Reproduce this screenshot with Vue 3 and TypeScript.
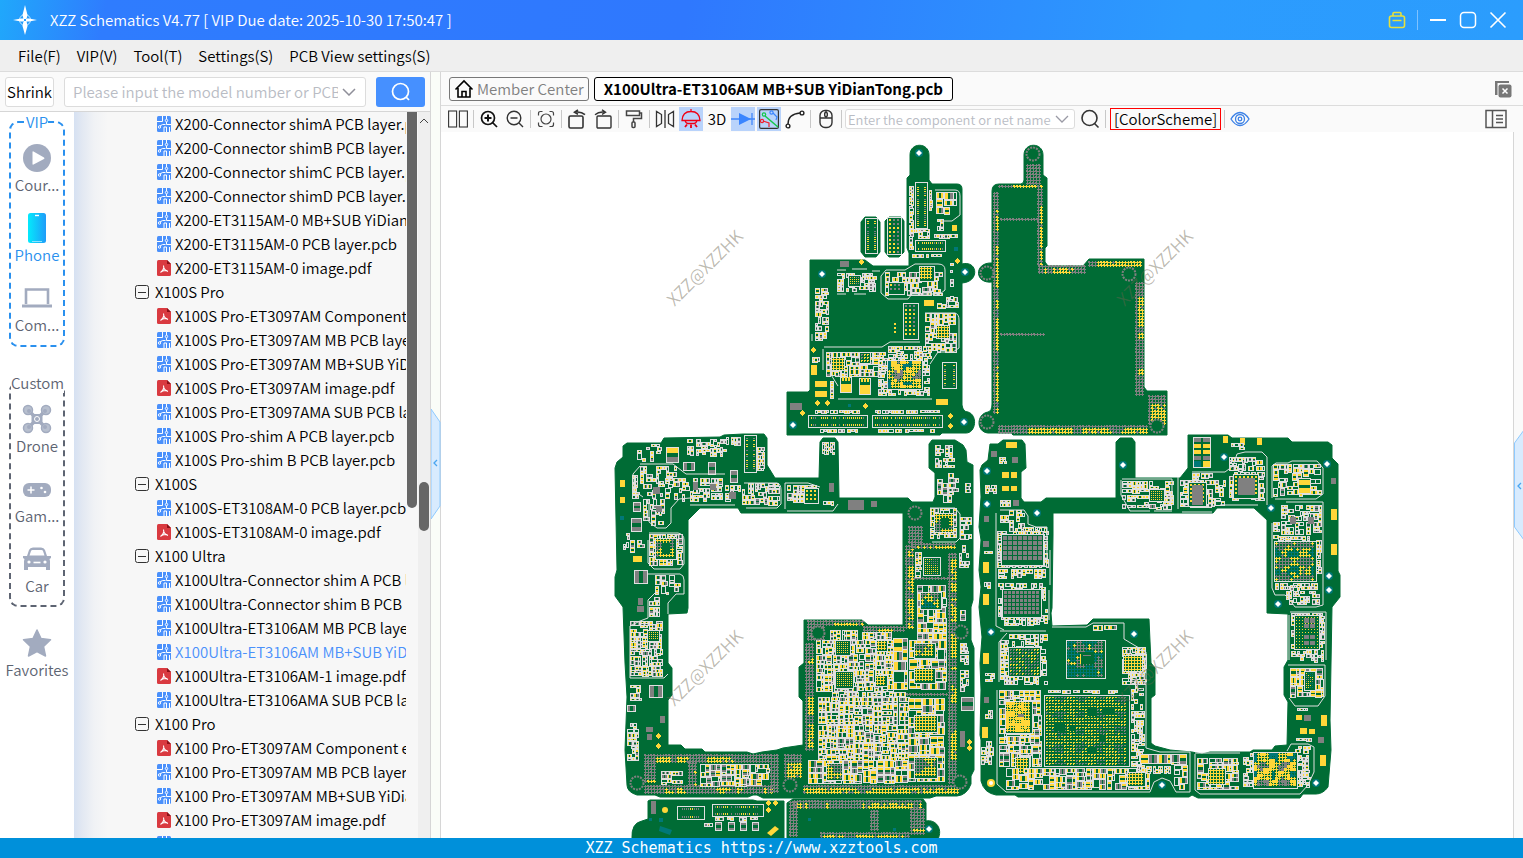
<script setup lang="ts">
import { ref } from 'vue'

type Kind = 'pcb' | 'pdf' | 'group'
interface Row { kind: Kind; text: string; active?: boolean }

const rows: Row[] = [
  { kind: 'pcb', text: 'X200-Connector shimA PCB layer.pcb' },
  { kind: 'pcb', text: 'X200-Connector shimB PCB layer.pcb' },
  { kind: 'pcb', text: 'X200-Connector shimC PCB layer.pcb' },
  { kind: 'pcb', text: 'X200-Connector shimD PCB layer.pcb' },
  { kind: 'pcb', text: 'X200-ET3115AM-0 MB+SUB YiDianTong.pcb' },
  { kind: 'pcb', text: 'X200-ET3115AM-0 PCB layer.pcb' },
  { kind: 'pdf', text: 'X200-ET3115AM-0 image.pdf' },
  { kind: 'group', text: 'X100S Pro' },
  { kind: 'pdf', text: 'X100S Pro-ET3097AM Component e.pdf' },
  { kind: 'pcb', text: 'X100S Pro-ET3097AM MB PCB layer.pcb' },
  { kind: 'pcb', text: 'X100S Pro-ET3097AM MB+SUB YiDianTong.pcb' },
  { kind: 'pdf', text: 'X100S Pro-ET3097AM image.pdf' },
  { kind: 'pcb', text: 'X100S Pro-ET3097AMA SUB PCB layer.pcb' },
  { kind: 'pcb', text: 'X100S Pro-shim A PCB layer.pcb' },
  { kind: 'pcb', text: 'X100S Pro-shim B PCB layer.pcb' },
  { kind: 'group', text: 'X100S' },
  { kind: 'pcb', text: 'X100S-ET3108AM-0 PCB layer.pcb' },
  { kind: 'pdf', text: 'X100S-ET3108AM-0 image.pdf' },
  { kind: 'group', text: 'X100 Ultra' },
  { kind: 'pcb', text: 'X100Ultra-Connector shim A PCB layer.pcb' },
  { kind: 'pcb', text: 'X100Ultra-Connector shim B PCB layer.pcb' },
  { kind: 'pcb', text: 'X100Ultra-ET3106AM MB PCB layer.pcb' },
  { kind: 'pcb', text: 'X100Ultra-ET3106AM MB+SUB YiDianTong.pcb', active: true },
  { kind: 'pdf', text: 'X100Ultra-ET3106AM-1 image.pdf' },
  { kind: 'pcb', text: 'X100Ultra-ET3106AMA SUB PCB layer.pcb' },
  { kind: 'group', text: 'X100 Pro' },
  { kind: 'pdf', text: 'X100 Pro-ET3097AM Component e.pdf' },
  { kind: 'pcb', text: 'X100 Pro-ET3097AM MB PCB layer.pcb' },
  { kind: 'pcb', text: 'X100 Pro-ET3097AM MB+SUB YiDianTong.pcb' },
  { kind: 'pdf', text: 'X100 Pro-ET3097AM image.pdf' },
  { kind: 'pcb', text: 'X100 Pro-ET3097AMA SUB PCB layer.pcb' },
]

const menus = ['File(F)', 'VIP(V)', 'Tool(T)', 'Settings(S)', 'PCB View settings(S)']
const model = ref('')
const net = ref('')

/* ---------- board view ---------- */
const outlines = [
  'M910 155C910 142 929 142 929 155V180L932 184H957Q962 184 962 189V264C978 260 980 282 962 283V405Q963 412 968 412C978 415 976 433 966 433H942L940 435H787V392H808L810 390V260H865L873 266H909V253L907 248V178L910 175Z',
  'M861 222L865 217H876L880 222V252L876 257H865L861 252Z M885 252V221L889 217H901L904 221V252L899 257H889Z',
  'M1024 155C1024 142 1043 142 1043 155V175L1047 178V246L1045 248V262L1048 266H1083L1089 259H1144V387L1147 391H1167V435H1013L1011 433H988C976 432 976 414 988 412Q992 411 992 404V282C974 284 974 262 992 263V191Q992 184 999 184H1021Q1024 183 1024 180Z',
  'M623 446L627 443H661L664 438L720 437L724 435L743 434H764L767 438V465L775 478H819L820 442L823 438H835L838 442L839 498H908L912 502H933L935 497V473L929 468V444L932 440H955L963 445L966 450L967 462L973 465V600L971 607V640L974 648V770L971 776V784Q967 795 957 796H936L930 798H763L757 795H753L748 797H660L655 795H637Q627 792 627 785L625 750L627 697L625 663L623 607L615 596V577L617 570L615 468L617 462L623 457Z M700 508L688 520V608L687 613L668 614V663L672 668V695L668 700V745H681L685 749H702L705 752H747L753 754L762 752L777 750L783 748L803 745V701L799 697V667L804 663V620H862L868 625H903V513H741L738 508Z',
  'M990 444H998L1003 440H1022L1025 444L1026 468L1021 472V498L1024 502H1041L1046 498H1116V442L1120 438H1132L1135 442V478H1180L1188 468V435H1228L1232 438H1288L1292 442H1328L1332 445V458L1338 464V571L1340 575V597L1332 607L1330 720L1331 750L1328 787Q1323 794 1316 794H1303L1300 798H1198L1192 795L1189 797H1018L1015 795H996Q984 793 981 781V740L980 735L981 690L980 663L982 637L979 607L981 587L979 570L981 540L979 527L981 497L980 470L982 465L988 460Z M1053 513V535L1052 608L1051 613L1052 626L1087 625L1093 619H1149L1151 663L1155 668V695L1151 698V743L1155 746L1170 750L1192 752L1202 754L1210 752H1250L1253 750H1272L1275 746L1287 745L1288 702L1284 695V667L1288 660V614L1267 613V520L1254 508H1217L1213 513Z',
  'M648 801L650 800H753L757 801H784V839H632Q631 823 642 821L648 819Z',
  'M787 803L793 799H923L926 803V821C936 819 943 829 938 839H787Z',
]

const silk = [
  'M881 283V276L886 270H905L915 264H938Q945 264 945 270V290L940 294H912L908 299H888L881 293Z',
  'M925 313H955Q959 314 959 320V348L953 352H938L930 364 M812 341V334 M824 347L832 347H882L890 342H920',
  'M823 349V370M830 373L838 386M838 399H932',
  'M935 190H955Q960 190 960 196V215L952 221H942 M837 270H846M852 269H867M872 271H880M837 294H846M854 294H866',
  'M640 464H673L686 474H725 M640 466L633 474V490L643 497M649 500V522L657 528H666L671 523V508L679 499L690 498',
  'M690 505H735M744 483H777Q781 484 781 490V504L777 508H746M785 509V483H808L820 487M787 511H833L838 504',
  'M649 533H678Q684 534 684 540V564L680 569H654L648 563V540M648 574H680Q684 575 684 580V594H676L668 603V614',
  'M630 678V626L640 621L648 618V600L655 593M630 678H664L668 674',
  'M930 508H955L960 514V538L956 542H932',
  'M996 513V626L1004 630M1000 510H1024L1028 516V524L1036 527H1047V560M1050 550V585M1049 590V620M1000 631H1046M1007 633L999 642V682',
  'M997 690V784L1006 792H1150L1154 782L1162 778L1170 781L1176 792H1190V752H1160L1146 748V652L1134 645L1124 639V623H1093L1086 627H1052',
  'M1122 479H1172V500M1121 480V495L1130 511H1150M1154 511H1172M1178 477V509M1182 512H1212M1192 472H1225L1233 466L1237 454L1245 452H1262L1267 457V505M1220 505H1258',
  'M1272 498V466L1276 463H1288L1292 461H1317L1323 468V494L1316 499H1275M1286 502H1323V605L1316 607H1295L1290 600L1285 595H1275L1272 588V523',
  'M1290 612H1326V660M1289 615V660M1288 665H1325V696L1318 706H1295L1289 698',
  'M1195 753H1240M1195 754V790L1200 794H1300L1308 785L1314 772V747L1308 744H1291L1287 751',
].join('')

const listing = `
c 915 182 13 47|p 909 186 5 64 4 .9|p 929 190 4 22 4 .9|p 936 192 21 24 8 .8|p 937 219 9 12 4 .8|y 952 225 5 6|p 910 229 20 10 4 .8|p 934 234 24 5 4 .9|c 915 240 31 12|p 912 254 31 4 4 .9|t 954 247 4 4|g 840 261 9 6
p 837 273 40 19 4 .8|b 848 275 13 12 2 1 m|p 885 272 58 24 6 .75|b 919 266 16 16 3 3 y|b 888 282 17 13 4 2 m|p 815 288 14 53 5 .85|b 903 303 16 37 4 2 m|y 924 300 10 6|p 937 297 22 12 5 .8|p 925 313 32 40 6 .85|b 936 325 14 14 3 3 y|p 888 346 44 14 4 .9
p 826 352 60 25 6 .9|b 831 357 14 14 3 3 y|b 859 352 12 12 3 2 m|p 878 358 52 38 4 .85|k 840 377 12 16 Y|k 859 378 12 17 Y|b 887 360 36 30 3 3 q|c 942 362 15 27|y 815 381 12 6|y 815 391 12 6|y 811 365 6 10|y 936 399 12 6|g 790 403 12 7|p 830 381 4 18 4 .9|p 812 357 8 6 4 .9
c 808 415 60 13|c 872 415 71 13|p 815 410 45 4 4 .9|p 875 410 65 4 4 .9|p 816 429 42 4 4 .8|p 878 429 57 4 4 .8|d 817 403|d 827 403|d 865 406|d 802 413|d 950 416|d 950 426|d 813 350|t 848 404 3 3|d 957 261|d 861 262
y 894 323 2 2|y 894 327 2 2|y 894 331 2 2|c 865 218 13 36|b 887 217 15 38 4 2 m|p 950 260 4 40 4 .5
v 1026 164 16 20 0|v 993 192 7 222 .6|v 998 185 45 4 .6|v 1037 188 7 78 .65|v 1038 265 48 8 .7|v 1088 261 55 5 .6|v 1135 282 8 114 .5|v 1148 395 18 30 .6|v 998 425 150 8 .85|v 1000 218 38 4 0|v 1000 333 46 2 0
c 744 435 13 38|p 757 447 8 25 4 .9|p 687 439 44 18 4 .6|p 720 437 22 9 4 .7|p 637 444 25 18 5 .5|k 666 447 13 16 y|k 683 462 12 9 g|k 708 462 8 13 g|k 730 470 8 13 g|p 640 466 37 18 5 .7|p 632 475 8 25 4 .8|p 643 484 22 42 5 .7|p 665 478 58 24 5 .75|p 725 485 16 17 5 .8|g 653 487 7 7|g 656 506 6 6|g 710 484 6 6|g 729 492 7 7|g 693 482 5 8
p 742 483 38 24 5 .8|p 787 485 30 18 5 .8|b 804 488 15 16 4 2 y|p 823 501 13 5 4 .7|p 822 442 13 13 4 .9|g 829 483 5 9|g 848 500 16 10|g 871 501 6 6|p 935 445 20 23 4 .8|p 937 473 22 30 6 .8|p 965 483 6 12 4 .9|p 930 508 27 31 5 .9|b 934 513 20 20 3 3 m|s 941 518 8 10
p 960 517 12 23 6 .8|p 959 545 11 23 4 .8|p 960 610 10 12 6 .8|p 960 643 9 22 4 .8|p 960 670 10 23 5 .8|k 961 697 13 14 g|g 960 731 5 16|d 969 742|d 969 748|y 620 480 5 7|y 620 497 5 6|t 620 516 4 4|y 633 556 9 6|k 633 502 8 10 g|k 631 518 11 14 g|p 623 530 7 20 4 .8|p 630 540 15 13 6 .8
p 649 534 34 32 5 .9|b 655 538 22 22 3 3 m|s 662 543 8 11|k 634 570 14 14 g|p 655 575 27 20 6 .7|p 649 597 11 20 5 .8|g 638 598 5 7|g 637 606 7 6|p 630 621 33 56 5 .9|b 647 630 13 12 2 1 y|p 630 682 12 20 5 .8|k 649 685 14 13 g|k 627 705 9 7 g|p 627 723 12 38 5 .8|g 660 716 5 7|g 646 727 7 5|g 647 734 5 6|d 658 736|d 658 746
v 644 754 128 9 .5|v 644 785 128 8 .4|v 644 762 12 22 .4|v 688 762 9 24 .3|v 770 754 8 38 0|p 661 771 22 14 5 .9|p 700 764 70 23 7 .95|v 784 754 18 24 .7
v 825 620 38 6 .75|v 807 620 18 22 0|v 863 626 42 7 .75|v 905 545 8 84 .65|v 911 543 44 6 .6|v 908 526 16 18 0|v 948 553 8 230 .55|v 805 643 8 108 .6|v 803 785 155 8 .85|v 913 577 35 4 0|v 903 693 44 3 0|p 915 552 7 26 5 .9|b 923 557 18 19 2 1 m
p 917 585 30 55 8 .95|b 920 592 22 18 3 3 t|p 909 640 38 50 9 1|p 893 638 15 52 12 1|p 816 640 78 52 6 1|p 830 630 28 11 5 1|p 862 632 30 8 6 1|b 835 640 16 16 2 1 y|b 835 671 19 18 2 1 y|b 875 675 13 12 3 3 y|b 876 640 12 12 3 3 y|p 822 692 84 6 5 .9|p 818 697 92 66 6 1|p 908 698 37 84 9 1|p 808 760 100 24 8 1
b 914 643 22 16 3 3 m|b 914 668 22 16 3 3 y|b 914 715 24 18 3 3 y|b 914 757 24 22 3 3 m|b 826 763 17 18 3 3 m
y 1006 442 11 6|y 1002 472 7 6|y 1011 472 6 6|y 1002 486 7 5|y 1011 486 6 5|g 991 451 6 6|g 1012 457 6 6|p 999 457 8 7 4 .9|p 985 485 12 9 4 .9|p 1000 500 11 7 4 .8|g 1013 500 6 6
p 1000 510 25 22 5 .7|p 1023 527 24 6 4 .9|p 997 531 52 37 4 .9|b 1001 534 43 32 5 4 g|p 998 569 50 10 5 .8|p 998 583 50 43 4 .85|b 1002 589 40 29 4 3 g|y 983 562 6 11|y 983 594 6 11|y 983 653 6 11|y 982 727 6 11|g 984 516 5 6|g 983 541 6 6|g 984 697 5 6|p 984 582 9 9 4 .8|p 984 551 9 4 4 .8|p 985 673 10 9 4 .8|p 985 710 8 9 5 .9|p 981 741 13 24 5 .8
p 1000 634 48 51 5 .75|b 1008 647 33 30 3 2 n|b 1066 640 40 39 3 3 T|s 1080 652 14 12|g 1083 655 8 1|y 1080 654 1 10|p 1093 625 24 6 7 1|p 1122 647 25 38 5 .9|b 1123 655 20 17 3 3 y|p 1131 673 14 95 4 .85|p 1048 690 70 4 4 .7|p 999 690 43 77 7 .95|b 1005 701 28 33 3 3 Y|b 1015 757 15 18 3 3 y|b 1044 695 86 72 3 2 u|s 1087 707 10 9|s 1103 707 11 8|s 1055 722 10 9|s 1069 725 7 6|s 1099 735 7 6|s 1087 748 9 5
p 1006 768 144 22 7 .9|p 1140 754 47 11 10 1|p 1137 766 35 8 4 .9|p 1174 765 15 25 7 .8|b 1127 772 19 15 3 3 y|p 1122 481 52 29 5 .7|b 1149 489 16 13 2 1 y|p 1180 480 46 28 5 .8|b 1188 482 19 25 4 2 y|g 1192 485 11 20|p 1192 473 22 7 4 .8
k 1193 437 18 31 s|g 1194 438 7 4|g 1203 438 7 4|y 1194 444 7 4|y 1203 444 7 4|y 1194 450 7 4|y 1203 450 7 4|g 1194 456 7 4|g 1203 456 7 4|t 1194 461 7 6|y 1203 461 7 6|y 1223 436 5 7|y 1240 438 5 7|y 1257 438 5 7|p 1231 443 14 8 4 .7|p 1229 457 36 44 5 .8|b 1233 474 26 25 4 2 y|g 1238 478 17 17
p 1273 464 49 33 6 .8|k 1298 478 13 16 s|y 1299 480 11 5|y 1299 488 11 5|y 1331 509 6 11|y 1331 544 6 11|g 1331 478 5 6|p 1281 505 41 30 5 .85|g 1290 517 6 7|g 1308 517 6 7|p 1273 522 7 18 4 .8|p 1278 536 38 5 4 .9|p 1316 540 6 34 4 .9|b 1274 541 43 41 3 3 t|p 1275 583 44 8 4 .9|p 1286 591 34 14 4 .85
p 1291 613 34 50 4 .85|b 1294 615 26 35 3 1 y|g 1304 618 5 5|g 1310 618 5 5|g 1304 624 5 4|g 1310 624 5 4|g 1304 635 5 4|g 1310 635 5 4|g 1304 641 5 4|g 1310 641 5 4|p 1290 668 34 30 7 .9|b 1304 671 12 20 2 1 t|p 1297 708 11 4 4 .9|y 1296 715 6 5|g 1304 715 7 6|y 1321 715 6 11|y 1300 728 7 6|y 1309 729 6 5|p 1296 738 16 4 4 .9|g 1318 737 6 6|y 1320 755 6 11
p 1197 758 42 32 7 .9|b 1208 768 18 17 3 3 y|p 1243 753 10 34 4 .8|p 1295 746 16 42 4 .85|b 1253 752 45 37 3 3 q
g 651 801 5 13|c 677 806 28 14|c 712 804 52 13|p 710 817 50 5 4 .8|p 704 823 9 4 4 1|k 715 822 7 9 g|k 728 822 7 9 g|k 740 822 7 9 g|k 752 822 7 9 g|d 768 803|d 775 803|d 768 810|t 659 818 4 4|t 649 818 3 3
v 793 800 128 8 .6|v 789 801 8 37 0|v 870 810 9 20 .2|v 910 808 14 28 .3|v 820 832 90 6 .6|t 808 818 3 3|t 893 828 3 3
`

const holes: [number, number][] = [
  [919, 153], [822, 274], [965, 272], [793, 425], [964, 422], [987, 471], [987, 504], [1037, 513], [991, 632],
  [1123, 465], [1224, 457], [1327, 464], [1271, 508], [1329, 576], [1329, 590], [1278, 604], [1134, 634], [1162, 785], [1316, 783], [929, 829],
]
const rings: [number, number][] = [
  [1033, 154], [987, 273], [987, 422], [1129, 274], [1157, 426], [790, 785], [637, 783], [960, 782], [961, 632], [915, 513], [818, 633],
]
const marks: [number, number][] = [[704, 267], [1154, 267], [704, 667], [1154, 667]]

const palette = { w: '#e0e0e0', s: '#006c35', y: '#ffd739', g: '#808080', t: '#007878' }
type Ink = keyof typeof palette
interface Shape { fill: string; d: string }

let seed = 20251030
function rnd(): number {
  seed = (seed + 0x6d2b79f5) | 0
  let t = Math.imul(seed ^ (seed >>> 15), 1 | seed)
  t = (t + Math.imul(t ^ (t >>> 7), 61 | t)) ^ t
  return ((t ^ (t >>> 14)) >>> 0) / 4294967296
}

function drawItem(line: string): Shape[] {
  const [op, ...args] = line.split(' ')
  const [x, y, w, h, a, b] = args.map(Number)
  const ink: Record<Ink, string> = { w: '', s: '', y: '', g: '', t: '' }
  const box = (c: Ink, bx: number, by: number, bw: number, bh: number) => {
    if (bw > 0 && bh > 0) ink[c] += `M${bx} ${by}h${bw}v${bh}h${-bw}z`
  }
  const plus = (c: Ink, px: number, py: number) => {
    box(c, px + 1, py, 1, 3)
    box(c, px, py + 1, 3, 1)
  }
  const part = (px: number, py: number, pw: number, ph: number, c: Ink) => {
    box('w', px, py, pw, ph)
    box('s', px + 1, py + 1, pw - 2, ph - 2)
    if (c === 's') return
    const other: Ink = rnd() < 0.65 ? c : 'g'
    if (pw >= ph) {
      const p = Math.max(1, Math.floor((pw - 1) / 3))
      box(c, px + 1, py + 1, p, ph - 2)
      box(other, px + pw - 1 - p, py + 1, p, ph - 2)
    } else {
      const p = Math.max(1, Math.floor((ph - 1) / 3))
      box(c, px + 1, py + 1, pw - 2, p)
      box(other, px + 1, py + ph - 1 - p, pw - 2, p)
    }
  }
  // fills one block with rows (or columns) of small parts
  const pack = (bx: number, by: number, bw: number, bh: number) => {
    const turned = rnd() < 0.5
    const along = turned ? bh : bw
    const across = turned ? bw : bh
    const shared = b >= 0.9 ? 1 : 0
    let v = 0
    while (v < across - 2) {
      let rh = a < 5 ? 3 + Math.round(rnd()) : a - 2 + Math.floor(rnd() * 3)
      rh = Math.min(across - v, rh)
      let u = 0
      while (u < along - 2) {
        const pw = Math.min(along - u, a - 1 + Math.floor(rnd() * 4))
        if (rnd() < b) {
          const r = rnd()
          const c: Ink = r < 0.7 ? 'y' : r < 0.9 ? 'g' : 's'
          if (turned) part(bx + v, by + u, rh, pw, c)
          else part(bx + u, by + v, pw, rh, c)
        }
        u += pw - (shared || rnd() < 0.5 ? 1 : 0)
      }
      v += rh - shared
    }
  }
  const divide = (bx: number, by: number, bw: number, bh: number) => {
    const limit = Math.max(13, a * 2)
    if (bw > limit && bw >= bh) {
      const s = Math.floor(bw * (0.35 + rnd() * 0.3))
      divide(bx, by, s, bh)
      divide(bx + s, by, bw - s, bh)
    } else if (bh > limit) {
      const s = Math.floor(bh * (0.35 + rnd() * 0.3))
      divide(bx, by, bw, s)
      divide(bx, by + s, bw, bh - s)
    } else pack(bx, by, bw, bh)
  }

  if (op === 'y' || op === 'g' || op === 't' || op === 's') box(op, x, y, w, h)
  if (op === 'k') {
    if (args[4] === 'Y') {
      box('w', x, y, w, h)
      box('s', x + 1, y + 1, w - 2, h - 2)
      box('y', x + 1, y + 7, w - 2, h - 8)
      for (let i = 2; i < w - 2; i += 3) box('y', x + i, y, 2, 4)
    } else part(x, y, w, h, args[4] as Ink)
  }
  if (op === 'd') ink.y += `M${x - 3} ${y}l3 -3l3 3l-3 3z`
  if (op === 'p') divide(x, y, w, h)
  if (op === 'b') {
    const mix = args[6]
    const n = b
    box('w', x, y, w, h)
    box('s', x + 1, y + 1, w - 2, h - 2)
    const off = n === 3 && a === 3 ? 1 : 2
    for (let cy = y + off; cy <= y + h - off - Math.min(n, a); cy += a) {
      for (let cx = x + off; cx <= x + w - off - Math.min(n, a); cx += a) {
        const patch = Math.sin(cx * 0.31) + Math.cos(cy * 0.37) + (rnd() - 0.5) * 1.6
        let c: Ink = 'y'
        if (mix === 'g') c = 'g'
        if (mix === 'm') c = patch > 0.4 ? 'g' : 'y'
        if (mix === 'n') c = rnd() < 0.55 ? 'g' : 'y'
        if (mix === 'u') c = patch > 0.8 ? 'g' : 'y'
        if (mix === 't') c = patch > 0.5 ? 'g' : patch < -0.8 ? 't' : 'y'
        if (mix === 'T') c = patch > 0.4 ? 'g' : patch < 0.1 ? 't' : 'y'
        if (mix === 'q') c = patch > 1.1 ? 'g' : patch < -1.3 ? 't' : 'y'
        if (mix === 'Y') c = patch > 1.7 ? 'g' : 'y'
        if (n === 3 && a === 3) {
          plus(c, cx, cy)
          if ((mix === 'q' || mix === 'Y') && rnd() < 0.5) box(c, cx, cy, 3, 3)
        } else if (n === 2 && a === 3) {
          box(c, cx, cy, 2, 1)
          if (mix !== 'u' || rnd() < 0.5) box(c, cx, cy + 1, 1, 1)
        } else box(c, cx, cy, n, n)
      }
    }
  }
  if (op === 'c') {
    box('w', x, y, w, h)
    box('s', x + 1, y + 1, w - 2, h - 2)
    const tall = h > w
    const len = tall ? h : w
    for (let i = 3; i < len - 3; i += 2) {
      if (rnd() < 0.15) continue
      const c: Ink = rnd() < 0.65 ? 'y' : 'g'
      if (tall) {
        box(c, x + 2, y + i, 2, 1)
        box(c, x + w - 4, y + i, 2, 1)
      } else {
        box(c, x + i, y + 2, 1, 2)
        box(c, x + i, y + h - 4, 1, 2)
      }
    }
  }
  if (op === 'v') {
    let c: Ink = 'g'
    const long = h > w
    const span = long ? w : h
    for (let i = 0; i < (long ? h : w) - 1; i += 3) {
      if (rnd() < 0.35) c = rnd() < a ? 'y' : 'g'
      for (let j = 0; j < span - 1; j += 3) {
        const edge = span > 5 && j === 0
        const k: Ink = edge || rnd() < 0.12 ? 'g' : c
        const vx = long ? x + j : x + i
        const vy = long ? y + i : y + j
        plus(k, vx, vy)
        if (rnd() < 0.5) box(k, vx, vy, 2, 2)
      }
    }
  }
  return (Object.keys(ink) as Ink[]).filter((c) => ink[c]).map((c) => ({ fill: palette[c], d: ink[c] }))
}

const shapes: Shape[] = listing.split(/[|\n]/).filter(Boolean).flatMap(drawItem)
</script>

<template>
  <div class="app">
    <svg class="defs" aria-hidden="true">
      <symbol id="i-pcb" viewBox="0 0 14 16">
        <rect width="14" height="16" rx="1.5" fill="#4a90fb" />
        <path d="M5.500 0v5.500H0M9.500 0v3M9.500 6v2.500H14M9.500 16v-5H7v5M2 10.500L5.500 8.500h3M12.500 16v-5" fill="none" stroke="#fff" />
        <g fill="#4a90fb" stroke="#fff"><circle cx="9.500" cy="4.500" r="1.200" /><circle cx="2.500" cy="11" r="1.200" /></g>
      </symbol>
      <symbol id="i-pdf" viewBox="0 0 14 16">
        <path d="M1.500 0H10l4 4v10.500q0 1.500-1.500 1.500h-11Q0 16 0 14.500v-13Q0 0 1.500 0z" fill="#d93a40" />
        <path d="M10 0l4 4h-4z" fill="#8c1118" />
        <path d="M6.500 5.500c0 3 1.500 5 4.500 6M7 7.500c-.5 2-1.500 3.500-3.500 5M4.500 11.500c2-1 4-1.200 6-1" fill="none" stroke="#fff" stroke-width="1.100" />
      </symbol>
    </svg>

    <header class="title">
      <svg class="logo" viewBox="0 0 24 30"><circle cx="12" cy="15" r="5.500" fill="none" stroke="#bfe6ff" /><path d="M12 0l2.500 10-1 4h-3l-1-4zM12 30l2.500-9-1-5h-3l-1 5zM0 15l8-1.500h3v3H8zM24 15l-8-1.500h-3v3h3z" fill="#fff" /></svg>
      <h1>XZZ Schematics V4.77 [ VIP Due date: 2025-10-30 17:50:47 ]</h1>
      <div class="winbtns">
        <button aria-label="Toolbox"><svg viewBox="0 0 18 18" fill="none" stroke="#e6e03c" stroke-width="1.600"><rect x="1.500" y="5" width="15" height="11.500" rx="2" /><path d="M5 5V2.500q0-1 1-1h6q1 0 1 1V5M4.500 9.500h9" /></svg></button>
        <span class="bar"></span>
        <button aria-label="Minimize"><svg viewBox="0 0 18 18"><path d="M1 9h16" stroke="#fff" stroke-width="2" /></svg></button>
        <button aria-label="Maximize"><svg viewBox="0 0 18 18"><rect x="1.500" y="1.500" width="15" height="15" rx="3.500" fill="none" stroke="#fff" stroke-width="1.500" /></svg></button>
        <button aria-label="Close"><svg viewBox="0 0 18 18"><path d="M1.500 1.500l15 15M16.500 1.500l-15 15" stroke="#fff" stroke-width="1.600" /></svg></button>
      </div>
    </header>

    <nav class="menu"><button v-for="m in menus" :key="m">{{ m }}</button></nav>

    <main class="body">
      <section class="left">
        <div class="search">
          <button class="shrink">Shrink</button>
          <div class="combo">
            <input v-model="model" aria-label="Model number" placeholder="Please input the model number or PCB" />
            <svg viewBox="0 0 14 8"><path d="M1 1l6 6 6-6" fill="none" stroke="#8f8f99" stroke-width="1.500" /></svg>
          </div>
          <button class="go" aria-label="Search"><svg viewBox="0 0 20 20" fill="none" stroke="#fff" stroke-width="1.700"><circle cx="9.500" cy="9.500" r="8" /><path d="M15 15l3 3" /></svg></button>
        </div>
        <div class="lower">
          <aside class="side">
            <fieldset class="box vip">
              <legend>VIP</legend>
              <button class="cat">
                <svg viewBox="0 0 32 32"><circle cx="16" cy="16" r="14" fill="#a2abbf" /><path d="M11.500 10v12q0 1 1 .5L23 17q1-.8 0-1.600l-10.500-6q-1-.4-1 .6z" fill="#fff" /></svg>Cour...
              </button>
              <button class="cat on">
                <svg viewBox="0 0 32 32"><defs><linearGradient id="ph"><stop offset="0" stop-color="#04eafc" /><stop offset="1" stop-color="#1f9cf9" /></linearGradient></defs><rect x="7" y="1" width="18" height="30" rx="2.500" fill="url(#ph)" /><path d="M14 3.500h4" stroke="#fff" stroke-width="1.400" /><path d="M11 29.500h10" stroke="#8be4ff" /></svg>Phone
              </button>
              <button class="cat">
                <svg viewBox="0 0 32 32" fill="none" stroke="#a2abbf"><path d="M5 22V7.500h22V22" stroke-width="2.600" /><path d="M1 24h30" stroke-width="3" /></svg>Com...
              </button>
            </fieldset>
            <fieldset class="box custom">
              <legend>Custom</legend>
              <button class="cat">
                <svg viewBox="0 0 32 32"><path d="M7 7l6 6h6l6-6M7 25l6-6h6l6 6" fill="none" stroke="#a2abbf" stroke-width="3.500" /><rect x="10.500" y="11" width="11" height="10" rx="3" fill="#a2abbf" /><g fill="#b7bfce" stroke="#a2abbf" stroke-width="1.500"><circle cx="7" cy="7" r="4.500" /><circle cx="25" cy="7" r="4.500" /><circle cx="7" cy="25" r="4.500" /><circle cx="25" cy="25" r="4.500" /></g><circle cx="16" cy="16" r="2.500" fill="#a2abbf" stroke="#fff" /><g fill="#a2abbf"><circle cx="8" cy="8" r="2" /><circle cx="24" cy="8" r="2" /><circle cx="8" cy="24" r="2" /><circle cx="24" cy="24" r="2" /></g></svg>Drone
              </button>
              <button class="cat">
                <svg viewBox="0 0 32 32"><rect x="2" y="10" width="28" height="14" rx="6" fill="#a2abbf" /><path d="M6.500 17h7M10 13.500v7" stroke="#fff" stroke-width="1.500" /><circle cx="20.500" cy="15" r="1.300" fill="#fff" /><circle cx="24" cy="19" r="1.300" fill="#fff" /></svg>Gam...
              </button>
              <button class="cat">
                <svg viewBox="0 0 32 32"><path d="M2 13h4l2-6q1-2.500 4-2.500h8q3 0 4 2.500l2 6h4v2l-1.500 1 .5 2v9h-4v-3H7v3H3v-9l.5-2L2 15z" fill="#a2abbf" /><path d="M8.500 12.500l1.500-4.500q.4-1 1.500-1h9q1.100 0 1.500 1l1.500 4.500z" fill="#fff" /><circle cx="8" cy="19" r="1.600" fill="#fff" /><circle cx="24" cy="19" r="1.600" fill="#fff" /><path d="M12.500 19.500h7" stroke="#fff" stroke-width="1.600" /></svg>Car
              </button>
            </fieldset>
            <button class="cat fav">
              <svg viewBox="0 0 32 32"><path d="M16 3l4 8.500 9.500 1.300-7 6.700L24.500 29 16 24.500 7.500 29l2-9.500-7-6.700L12 11.500z" fill="#a2abbf" stroke="#a2abbf" stroke-width="1.500" stroke-linejoin="round" /></svg>Favorites
            </button>
          </aside>
          <ul class="tree">
            <li v-for="(r, i) in rows" :key="i" :class="[r.kind, { active: r.active }]">
              <svg v-if="r.kind === 'group'" viewBox="0 0 14 14"><rect x=".5" y=".5" width="13" height="13" rx="2" fill="none" stroke="#333" /><path d="M3 7.500h8" stroke="#333" /></svg>
              <svg v-else viewBox="0 0 14 16"><use :href="'#i-' + r.kind" /></svg>
              <span>{{ r.text }}</span>
            </li>
          </ul>
          <div class="inner-bar"><i></i></div>
          <div class="outer-bar"><svg viewBox="0 0 10 6"><path d="M1 5l4-4 4 4" fill="none" stroke="#444" /></svg><i></i></div>
        </div>
      </section>

      <div class="split"><button class="grip" aria-label="Collapse left panel"><svg viewBox="0 0 10 112"><path d="M0 1l9 13v84l-9 13z" fill="#d8ebfe" stroke="#8ecaff" /><path d="M6 52l-3 3 3 3" fill="none" stroke="#4aa5f0" stroke-width="1.300" /></svg></button></div>

      <section class="right">
        <div class="tabs">
          <button class="tab"><svg viewBox="0 0 20 20" fill="none" stroke="#000" stroke-width="1.600"><path d="M1.500 10.500L10 2l8.500 8.500M4 9v9h12V9M8 18v-5.500h4V18" /></svg>Member Center</button>
          <button class="tab cur">X100Ultra-ET3106AM MB+SUB YiDianTong.pcb</button>
          <button class="closeall" aria-label="Close all tabs"><svg viewBox="0 0 18 18"><path d="M1 15V1h14v2H3.500v12z" fill="#777" /><rect x="4.500" y="4.500" width="13" height="13" rx="2" fill="#777" /><path d="M8.500 8.500l5 5M13.500 8.500l-5 5" stroke="#fff" stroke-width="1.500" /></svg></button>
        </div>

        <div class="tools">
          <button class="tb" aria-label="Split view"><svg viewBox="0 0 20 20" fill="none" stroke="#333" stroke-width="1.100"><rect x=".6" y="2" width="8" height="16" /><rect x="11.400" y="2" width="8" height="16" /></svg></button>
          <span class="sep"></span>
          <button class="tb" aria-label="Zoom in"><svg viewBox="0 0 20 20" fill="none" stroke="#111" stroke-width="1.700"><circle cx="9" cy="9" r="6.500" /><path d="M13.500 13.500l4.500 4.500" /><path d="M9 5.500v7M5.500 9h7" stroke-width="2" /></svg></button>
          <button class="tb" aria-label="Zoom out"><svg viewBox="0 0 20 20" fill="none" stroke="#333" stroke-width="1.400"><circle cx="9" cy="9" r="6.800" /><path d="M14 14l4 4M5.500 9h7" /></svg></button>
          <span class="sep"></span>
          <button class="tb" aria-label="Fit view"><svg viewBox="0 0 20 20" fill="none" stroke="#444" stroke-width="1.200"><path d="M2.500 6.500V4.500q0-2 2-2h2M13.500 2.500h2q2 0 2 2v2M17.500 13.500v2q0 2-2 2h-2M6.500 17.500h-2q-2 0-2-2v-2" /><circle cx="10" cy="10" r="5" /></svg></button>
          <span class="sep"></span>
          <button class="tb" aria-label="Rotate right"><svg viewBox="0 0 20 20" fill="none" stroke="#333" stroke-width="1.600"><rect x="2" y="7" width="14" height="12" rx="1.500" /><path d="M8 3.200q6-1 10 2.500M11 .8L7.500 3.300l3.500 2" /></svg></button>
          <button class="tb" aria-label="Rotate left"><svg viewBox="0 0 20 20" fill="none" stroke="#333" stroke-width="1.400"><rect x="4" y="7" width="14" height="12" rx="1" /><path d="M12 3.200q-6-1-10 2.500M9 .8l3.500 2.500L9 5.300" /></svg></button>
          <span class="sep"></span>
          <button class="tb" aria-label="Paint"><svg viewBox="0 0 20 20" fill="none" stroke="#444" stroke-width="1.500"><rect x="2.500" y="2" width="13" height="4.500" /><path d="M15.500 4h2v5.500h-8V13" /><rect x="8" y="13" width="3" height="5.500" rx="1" /></svg></button>
          <span class="sep"></span>
          <button class="tb" aria-label="Mirror"><svg viewBox="0 0 20 20" fill="none" stroke="#333" stroke-width="1.300"><path d="M1.500 2.500v15l5-3v-9zM18.500 2.500v15l-5-3v-9zM10 1v18" /></svg></button>
          <button class="tb hl" aria-label="Lamp"><svg viewBox="0 0 20 20" fill="none" stroke="#f00014" stroke-width="1.300"><path d="M1 11.500Q1.500 2.500 10 2.500t9 9zM10 2.500V0M4 11.500q1 3 3 3h6q2 0 3-3" /><path d="M10 15.500V19M6 15.500l-2 2.500M14 15.500l2 2.500" stroke-width="1.800" /></svg></button>
          <button class="tb txt">3D</button>
          <button class="tb hl wide" aria-label="Diode"><svg viewBox="0 0 24 20"><path d="M0 10h24M21 4v12" stroke="#4288fa" stroke-width="1.300" /><path d="M8 4l12 6-12 6z" fill="#3a85ff" /></svg></button>
          <button class="tb hl" aria-label="Nets"><svg viewBox="0 0 20 20" fill="none" stroke-width="1.200"><rect x=".6" y=".6" width="18.800" height="18.800" rx="1.500" stroke="#333" /><path d="M6 7l13 11" stroke="#14c84a" stroke-width="1.500" /><circle cx="5" cy="5.500" r="1.700" stroke="#14c84a" /><path d="M14 4l4 4-1 3" stroke="#3a85ff" /><circle cx="12.500" cy="3.500" r="1.600" stroke="#3a85ff" /><path d="M4 12l6 2v4" stroke="#f02030" /><circle cx="3" cy="12" r="1.600" stroke="#f02030" /></svg></button>
          <button class="tb" aria-label="Curve"><svg viewBox="0 0 20 20" fill="none" stroke="#222" stroke-width="1.400"><path d="M3 15Q3 5 15 4" /><circle cx="3" cy="17" r="1.900" /><circle cx="17" cy="4" r="1.900" /></svg></button>
          <span class="sep"></span>
          <button class="tb" aria-label="Mouse"><svg viewBox="0 0 20 20" fill="none" stroke="#333" stroke-width="1.400"><rect x="4" y="1.500" width="12" height="17" rx="5" /><path d="M4 9h12M10 1.500V4M10 7.500V9" /><rect x="8.700" y="3.500" width="2.600" height="4" rx="1" /></svg></button>
          <span class="sep"></span>
          <div class="combo small">
            <input v-model="net" aria-label="Component or net name" placeholder="Enter the component or net name to search" />
            <svg viewBox="0 0 14 8"><path d="M1 1l6 6 6-6" fill="none" stroke="#9a9aa5" stroke-width="1.300" /></svg>
          </div>
          <button class="tb find" aria-label="Find"><svg viewBox="0 0 20 20" fill="none" stroke="#333" stroke-width="1.600"><circle cx="9.500" cy="9" r="7.500" /><path d="M14.500 14.500l4 4" /></svg></button>
          <span class="sep"></span>
          <button class="scheme">[ColorScheme]</button>
          <span class="sep"></span>
          <button class="tb" aria-label="Show"><svg viewBox="0 0 20 20" fill="none" stroke="#3d82e6" stroke-width="1.300"><path d="M1 10Q5 3.500 10 3.500T19 10q-4 6.500-9 6.500T1 10z" /><circle cx="10" cy="10" r="4.500" /><circle cx="10" cy="10" r="1.800" /></svg></button>
          <button class="tb last" aria-label="Side panel"><svg viewBox="0 0 22 20" fill="none" stroke="#555" stroke-width="1.500"><rect x="1" y="1.500" width="20" height="17" /><path d="M7.500 1.500v17M11 6.500h7M11 10h7M11 13.500h7" /></svg></button>
        </div>

        <div class="view">
          <svg class="board" viewBox="441 132 1072 706" role="img" aria-label="PCB layout">
            <path v-for="(o, i) in outlines" :key="'o' + i" :d="o" fill="#006c35" fill-rule="evenodd" stroke="#006c35" stroke-linejoin="round" />
            <g shape-rendering="crispEdges">
              <path v-for="(s, i) in shapes" :key="i" :d="s.d" :fill="s.fill" />
            </g>
            <path :d="silk" fill="none" stroke="#e0e0e0" />
            <circle v-for="(r, i) in rings" :key="'r' + i" :cx="r[0]" :cy="r[1]" r="6.500" fill="#006c35" stroke="#808080" stroke-width="2" stroke-dasharray="2 1" />
            <g v-for="(h, i) in holes" :key="'h' + i">
              <circle :cx="h[0]" :cy="h[1]" r="4" fill="#007878" />
              <path :d="`M${h[0] - 3} ${h[1]}l3 -3l3 3l-3 3z`" fill="#fff" />
            </g>
            <circle cx="991" cy="783" r="4" fill="#ffd739" /><circle cx="991" cy="783" r="2" fill="#fff" />
            <circle cx="665" cy="810" r="3" fill="#ffd739" />
            <path d="M767 833l8-7 4 3-8 7z" fill="#ffd739" /><path d="M660 826l12 4-2 5-11-4z" fill="#007878" />
            <text v-for="(m, i) in marks" :key="'m' + i" class="mark" :x="m[0]" :y="m[1]" :transform="`rotate(-45 ${m[0]} ${m[1]})`">XZZ@XZZHK</text>
          </svg>
          <div class="rail"><button class="grip" aria-label="Expand right panel"><svg viewBox="0 0 10 112"><path d="M10 1L.5 14v84L10 111z" fill="#d8ebfe" stroke="#8ecaff" /><path d="M7 54l-3 3 3 3" fill="none" stroke="#4aa5f0" stroke-width="1.300" /></svg></button></div>
        </div>
      </section>
    </main>

    <footer class="foot">XZZ Schematics https://www.xzztools.com</footer>
  </div>
</template>

<style>
body { margin: 0; overflow: hidden; }
</style>

<style scoped>
.app { display: flex; flex-direction: column; height: 100vh; font: 350 15px/20px "Noto Sans CJK SC", "Open Sans", sans-serif; color: #000; background: #fff; overflow: hidden; }
* { box-sizing: border-box; }
button { font: inherit; color: inherit; background: none; border: 0; padding: 0; margin: 0; cursor: pointer; }
svg { display: block; flex: none; }
.defs { position: absolute; width: 0; height: 0; }

.title { flex: none; height: 40px; display: flex; align-items: center; padding: 0 16px 0 13px; color: #fff; background: linear-gradient(100deg, #20a8fb 0, #2f7cfe 7%, #2f78fe 45%, #2c9bfe 78%, #2b9dfd 100%); }
.logo { width: 24px; height: 30px; margin-right: 13px; }
.title h1 { margin: 0; font-size: 15px; font-weight: inherit; white-space: pre; }
.winbtns { margin-left: auto; display: flex; align-items: center; gap: 12px; }
.winbtns svg { width: 18px; height: 18px; }
.bar { width: 1px; height: 20px; margin: 0 -1px; background: #7fc2ff; }

.menu { flex: none; height: 32px; display: flex; align-items: center; gap: 16px; padding-left: 18px; background: #efefef; border-bottom: 1px solid #dcdcdc; }

.body { flex: 1; min-height: 0; display: flex; }
.left { flex: none; width: 431px; display: flex; flex-direction: column; border-right: 1px solid #d6d6d6; background: #fafafa; }
.search { flex: none; height: 40px; display: flex; align-items: center; padding: 0 5px; border-bottom: 1px solid #d6d6d6; }
.shrink { width: 49px; height: 30px; border: 1px solid #dcdcdc; border-radius: 3px; background: #fff; }
.combo { display: flex; align-items: center; width: 302px; height: 30px; margin: 0 10px; padding: 0 9px 0 8px; border: 1px solid #dcdcdc; border-radius: 3px; background: #fff; }
.combo input { flex: 1; min-width: 0; height: 100%; padding: 0; border: 0; outline: 0; background: none; font: inherit; }
.combo input::placeholder { color: #b9bcc4; opacity: 1; }
.combo svg { width: 14px; height: 8px; margin-left: 4px; }
.go { width: 49px; height: 30px; display: grid; place-items: center; border-radius: 3px; background: #4690ff; }
.go svg { width: 20px; height: 20px; }

.lower { flex: 1; min-height: 0; display: flex; overflow: hidden; }
.side { flex: none; width: 74px; display: flex; flex-direction: column; align-items: center; background: #fff; color: #5d6472; overflow: hidden; }
.box { flex: none; width: 56px; margin: 0; padding: 8px 0 0; border: 2px dashed #2a90ee; border-radius: 9px; min-width: 0; }
.box legend { margin: 0 auto; padding: 0; line-height: 20px; text-align: center; }
.vip { height: 235px; }
.vip legend { color: #2a90ee; }
.custom { height: 234px; margin-top: 26px; border-color: #5d6472; }
.cat { display: flex; flex-direction: column; align-items: center; width: 100%; height: 70px; padding-top: 2px; line-height: 22px; }
.cat svg { width: 32px; height: 32px; }
.cat.on { color: #2a90ee; }
.fav { margin-top: 18px; }

.tree { flex: 1; min-width: 0; margin: 0; padding: 0; list-style: none; overflow: hidden; background: linear-gradient(90deg, #d6e1f2 0, #e2e8f2 8px, #f0f2f5 20px, #f7f7f7 34px); }
.tree li { display: flex; align-items: center; height: 24px; padding-left: 83px; white-space: nowrap; }
.tree li svg { width: 14px; height: 16px; margin-right: 4px; }
.tree li.group { padding-left: 61px; }
.tree li.group svg { height: 14px; margin-right: 6px; }
.tree li.active { color: #4a90fb; }
.tree span { flex: 1; min-width: 0; overflow: hidden; }
.inner-bar { flex: none; width: 12px; padding: 0 1px; background: #f7f7f7; }
.inner-bar i { display: block; height: 396px; border-radius: 0 0 5px 5px; background: #666; }
.outer-bar { flex: none; width: 12px; padding-left: 1px; background: #efefef; }
.outer-bar svg { width: 10px; height: 6px; margin-top: 6px; }
.outer-bar i { display: block; width: 10px; height: 49px; margin-top: 358px; border-radius: 5px; background: #666; }

.split { flex: none; width: 10px; display: flex; align-items: center; background: #fafdf8; border-right: 1px solid #d6d6d6; }
.grip { display: block; width: 10px; height: 112px; }
.grip svg { width: 10px; height: 112px; }
.split .grip { margin-top: 18px; }

.right { flex: 1; min-width: 0; display: flex; flex-direction: column; }
.tabs { flex: none; height: 34px; display: flex; align-items: center; gap: 5px; padding: 0 11px 0 8px; background: #fafafa; border-bottom: 1px solid #dcdcdc; }
.tab { display: flex; align-items: center; height: 24px; padding: 0 4px; border: 1px solid #777; border-radius: 3px; color: #808080; white-space: nowrap; }
.tab svg { width: 20px; height: 20px; margin-right: 3px; }
.tab.cur { padding: 0 9px; border-color: #000; color: #000; font-weight: 700; background: #fff; }
.closeall { margin-left: auto; }
.closeall svg { width: 18px; height: 18px; }

.tools { flex: none; height: 26px; display: flex; align-items: center; padding: 0 4px; background: #fafafa; }
.tb { flex: none; width: 24px; height: 24px; margin: 0 1px; display: grid; place-items: center; }
.tb svg { width: 20px; height: 20px; }
.tb.wide svg { width: 24px; }
.hl { background: #b9d3fb; }
.sep { flex: none; width: 1px; height: 18px; margin: 0 2px; background: #c8c8c8; }
.combo.small { width: 230px; height: 20px; margin: 0 2px 0 1px; padding: 0 5px 0 2px; font-size: 13px; }
.scheme { height: 22px; margin: 0 1px 0 2px; padding: 0 3px; border: 1px solid #f00; }
.tb.last { margin-left: auto; margin-right: 11px; }
.tb.last svg { width: 22px; }

.view { flex: 1; min-height: 0; display: flex; background: #fff; }
.board { flex: 1; min-width: 0; width: 100%; height: 100%; }
.mark { font: 350 17px "Noto Sans CJK SC", sans-serif; fill: #6b6450; fill-opacity: .45; text-anchor: middle; dominant-baseline: central; }
.rail { flex: none; width: 10px; display: flex; align-items: center; background: #fafafa; border-left: 1px solid #d6d6d6; }

.foot { flex: none; height: 20px; background: #0090da; color: #fff; text-align: center; font: 15px/20px "DejaVu Sans Mono", "Liberation Mono", monospace; }
</style>
